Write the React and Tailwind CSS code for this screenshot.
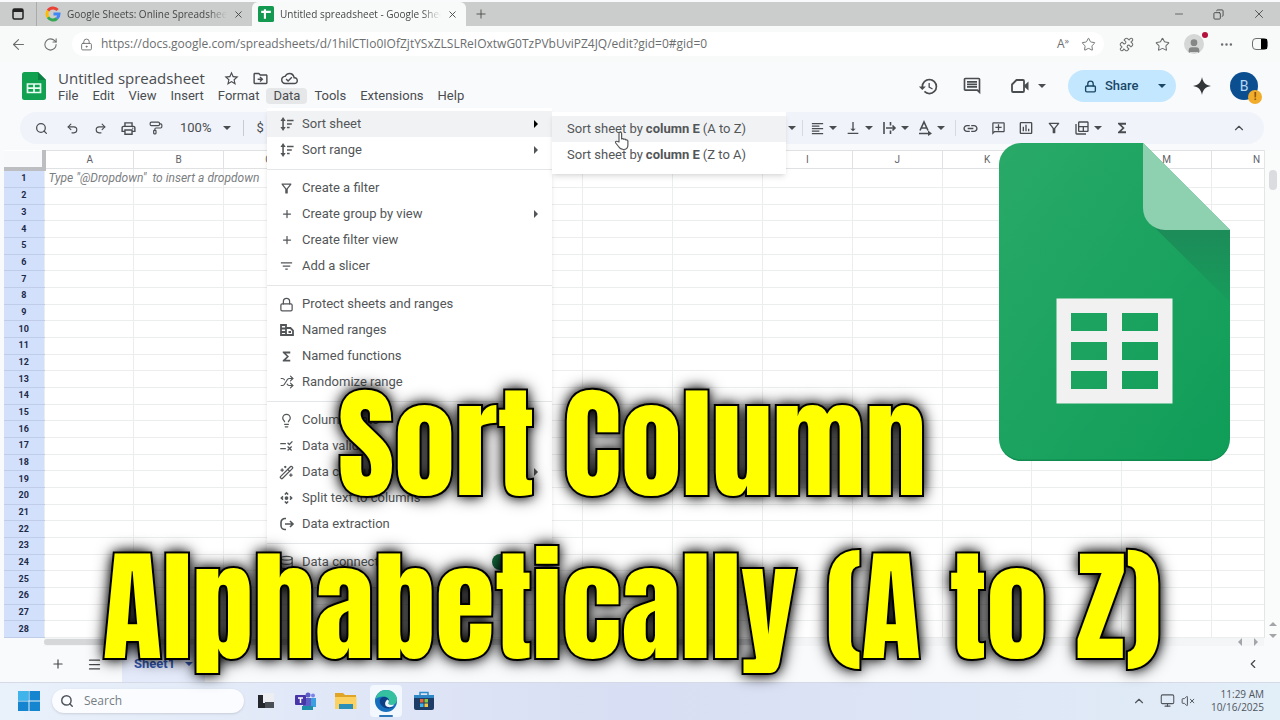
import React from 'react';
import {
    ArrowLeft,
    RotateCw,
    LockKeyhole,
    Lock,
    Star,
    Undo2,
    Redo2,
    PaintRoller,
    Search,
    ChevronUp,
    ChevronLeft,
    X,
    Minus,
    Plus,
    Ellipsis,
    Menu,
    Puzzle,
    Shuffle,
    Lightbulb,
    WandSparkles,
    Database,
    Copy,
    VolumeX,
    Monitor,
    User,
} from 'lucide-react';
import {
    MdFilterList,
    MdOutlineFilterAlt,
    MdFormatAlignLeft,
    MdVerticalAlignBottom,
    MdOutlineRule,
    MdOutlineControlCamera,
    MdBackupTable,
    MdHistory,
    MdOutlineComment,
    MdOutlineAddComment,
    MdInsertChartOutlined,
    MdOutlinePrint,
    MdFunctions,
    MdLink,
    MdStarBorder,
    MdOutlineDriveFileMove,
    MdOutlineCloudDone,
} from 'react-icons/md';

const COLUMNS = ['A', 'B', 'C', 'D', 'E', 'F', 'G', 'H', 'I', 'J', 'K', 'L', 'M', 'N'];
const ROWS = Array.from({ length: 28 }, (_, i) => i + 1);
const MENUS = ['File', 'Edit', 'View', 'Insert', 'Format', 'Data', 'Tools', 'Extensions', 'Help'];

const SortIcon = () => (
    <svg viewBox="0 0 16 16" className="h-3.5 w-3.5 shrink-0" fill="none" stroke="currentColor" strokeWidth="1.8">
        <path d="M3.500 3.500v9M8 4h7.500M8 8h5.500M8 12h3" />
        <path d="M3.500 0 6.500 4.500h-6zM3.500 16l-3-4.500h6z" fill="currentColor" stroke="none" />
    </svg>
);

const NamedRangesIcon = () => (
    <svg viewBox="0 0 16 16" className="h-4 w-4 shrink-0" fill="none" stroke="currentColor" strokeWidth="1.8">
        <path d="M2 3h5v10H2zM7 6h4.500L14 8.500V13H7M2 6.500h5M2 10h5M9.500 10h2.500" />
    </svg>
);

const ExtractIcon = () => (
    <svg viewBox="0 0 16 16" className="h-4 w-4 shrink-0" fill="none" stroke="currentColor" strokeWidth="1.6">
        <path d="M7 2.500H6a4 4 0 0 0-4 4v3a4 4 0 0 0 4 4h1M6 8h8M11 5l3 3-3 3" />
    </svg>
);

const WrapIcon = () => (
    <svg viewBox="0 0 16 16" className="h-4 w-4 shrink-0" fill="none" stroke="currentColor" strokeWidth="1.6">
        <path d="M3 2v12M9.500 2v3.500M9.500 10.500V14M5 8h9M11.500 5.500 14 8l-2.500 2.500" />
    </svg>
);

const RotationIcon = () => (
    <svg viewBox="0 0 16 16" className="h-4 w-4 shrink-0" fill="none" stroke="currentColor" strokeWidth="1.6">
        <path d="M3 10.500 7 2l4 8.500M4.500 8h5M2 13.500h9" />
        <path d="M11 10.500l4 3-4 2.500z" fill="currentColor" stroke="none" />
    </svg>
);

const MeetIcon = () => (
    <svg viewBox="0 0 20 18" className="h-[18px] w-5" fill="none" stroke="currentColor" strokeWidth="1.8">
        <path d="M6.500 3H13a1 1 0 0 1 1 1v10a1 1 0 0 1-1 1H3a1 1 0 0 1-1-1V7.500z" strokeLinejoin="round" />
        <path d="M14 8.500l4.500-4v9l-4.500-4z" fill="currentColor" stroke="none" />
    </svg>
);

const MENU_GROUPS = [
    [
        { label: 'Sort sheet', icon: <SortIcon />, sub: true, active: true },
        { label: 'Sort range', icon: <SortIcon />, sub: true },
    ],
    [
        { label: 'Create a filter', icon: <MdOutlineFilterAlt size={15} /> },
        { label: 'Create group by view', icon: <Plus size={12} strokeWidth={2.5} />, sub: true },
        { label: 'Create filter view', icon: <Plus size={12} strokeWidth={2.5} /> },
        { label: 'Add a slicer', icon: <MdFilterList size={16} /> },
    ],
    [
        { label: 'Protect sheets and ranges', icon: <Lock size={15} /> },
        { label: 'Named ranges', icon: <NamedRangesIcon /> },
        { label: 'Named functions', icon: <MdFunctions size={15} /> },
        { label: 'Randomize range', icon: <Shuffle size={14} /> },
    ],
    [
        { label: 'Column stats', icon: <Lightbulb size={15} /> },
        { label: 'Data validation', icon: <MdOutlineRule size={16} /> },
        { label: 'Data cleanup', icon: <WandSparkles size={15} />, sub: true },
        { label: 'Split text to columns', icon: <MdOutlineControlCamera size={16} /> },
        { label: 'Data extraction', icon: <ExtractIcon /> },
    ],
    [{ label: 'Data connectors', icon: <Database size={15} />, badge: true }],
];

const Caret = ({ className = '' }) => (
    <svg viewBox="0 0 8 4" className={`h-1 w-2 shrink-0 ${className}`} fill="currentColor">
        <path d="M0 0h8L4 4z" />
    </svg>
);

const GoogleIcon = () => (
    <svg viewBox="0 0 16 16" className="h-4 w-4 shrink-0" fill="none" strokeWidth="3">
        <path d="M12.600 4A6 6 0 0 0 3 4.800" stroke="#ea4335" />
        <path d="M3 4.800A6 6 0 0 0 3 11.200" stroke="#fbbc05" />
        <path d="M3 11.200A6 6 0 0 0 12 12.500" stroke="#34a853" />
        <path d="M12 12.500A6 6 0 0 0 14 8H8.500" stroke="#4285f4" />
    </svg>
);

const SheetsTabIcon = () => (
    <svg viewBox="0 0 15 15" className="h-4 w-4 shrink-0">
        <rect width="15" height="15" rx="1.500" fill="#149a50" />
        <path d="M3 5.500h9M6.500 3v9" stroke="#fff" strokeWidth="2" />
    </svg>
);

const SheetsDocIcon = () => (
    <svg viewBox="0 0 24 28" className="h-7 w-6 shrink-0">
        <path d="M2.500 0H16l8 8v17.500a2.500 2.500 0 0 1-2.500 2.500h-19A2.500 2.500 0 0 1 0 25.500v-23A2.500 2.500 0 0 1 2.500 0z" fill="#12a150" />
        <path d="M16 0l8 8h-8z" fill="#0b8043" />
        <path d="M5.500 12h13v8.500h-13zM5.500 16.200h13M12 12v8.500" fill="none" stroke="#e8fff1" strokeWidth="1.700" />
    </svg>
);

const SheetsLogo = () => (
    <svg viewBox="0 0 231 318" className="h-auto w-full" role="img" aria-label="Google Sheets">
        <defs>
            <linearGradient id="body" x1="0" y1="0" x2="1" y2="1">
                <stop offset="0" stopColor="#29a968" />
                <stop offset="1" stopColor="#0f9d58" />
            </linearGradient>
            <linearGradient id="fold" x1="0" y1="0" x2="0" y2="1">
                <stop offset="0" stopColor="#1d8a58" />
                <stop offset="1" stopColor="#179c5b" />
            </linearGradient>
        </defs>
        <path d="M22 0h122l87 87v209a22 22 0 0 1-22 22H22a22 22 0 0 1-22-22V22A22 22 0 0 1 22 0z" fill="url(#body)" />
        <path d="M151 80l80 79V87z" fill="url(#fold)" />
        <path d="M144 0l87 87h-65a22 22 0 0 1-22-22z" fill="#8ed1b1" />
        <path
            d="M57.500 155.500h116v105h-116zM72 170v18h36v-18zM123 170v18h36v-18zM72 199v18h36v-18zM123 199v18h36v-18zM72 228v18h36v-18zM123 228v18h36v-18z"
            fill="#f1f1f1"
            fillRule="evenodd"
        />
        <path d="M2 304a22 22 0 0 0 20 14h187a22 22 0 0 0 20-14a22 22 0 0 1-20 12.500H22A22 22 0 0 1 2 304z" fill="#0b7c46" opacity="0.6" />
    </svg>
);

const BrowserTabs = () => (
    <div className="flex h-6 items-stretch bg-[#cbcdcc] pr-3.5 text-[#454746]">
        <div className="flex w-9 items-center justify-center">
            <svg viewBox="0 0 12 12" className="h-3 w-3" fill="none" stroke="#222" strokeWidth="1.500">
                <rect x="1" y="1" width="10" height="10" rx="1.500" />
                <path d="M1 2.500h10" strokeWidth="3" />
            </svg>
        </div>
        <div className="flex w-[216px] items-center gap-1.5 border-l border-[#a9acab] pl-2">
            <GoogleIcon />
            <span className="flex-1 overflow-hidden whitespace-nowrap font-['Open_Sans',sans-serif] text-[10px] font-medium [mask-image:linear-gradient(to_right,#000_88%,transparent)]">
                Google Sheets: Online Spreadsheets
            </span>
            <button aria-label="Close Google Sheets tab" className="mr-2"><X size={11} /></button>
        </div>
        <div className="flex w-[214px] items-center gap-1.5 rounded-t-md bg-[#f8faf9] pl-1.5">
            <SheetsTabIcon />
            <span className="flex-1 overflow-hidden whitespace-nowrap font-['Open_Sans',sans-serif] text-[10px] font-medium [mask-image:linear-gradient(to_right,#000_88%,transparent)]">
                Untitled spreadsheet - Google Sheets
            </span>
            <button aria-label="Close spreadsheet tab" className="mr-2"><X size={11} /></button>
        </div>
        <button aria-label="New tab" className="px-2"><Plus size={14} strokeWidth={1.5} /></button>
        <div className="ml-auto flex items-center gap-7">
            <button aria-label="Minimize"><Minus size={12} strokeWidth={1.5} /></button>
            <button aria-label="Restore"><Copy size={11} className="-scale-x-100" /></button>
            <button aria-label="Close window"><X size={14} strokeWidth={1.5} /></button>
        </div>
    </div>
);

const AddressBar = () => (
    <div className="flex h-9 items-center bg-[#f8f9f9] pl-2 pr-3 text-[#6b6e6f]">
        <button aria-label="Back" className="flex w-5 justify-center"><ArrowLeft size={17} strokeWidth={1.5} /></button>
        <button aria-label="Reload" className="ml-3 flex w-5 justify-center"><RotateCw size={15} strokeWidth={1.7} /></button>
        <div className="ml-3 flex h-6 flex-1 items-center rounded-full bg-white pl-2 pr-2">
            <LockKeyhole size={13} strokeWidth={1.7} />
            <input
                aria-label="Address"
                readOnly
                className="ml-2 min-w-0 flex-1 bg-transparent font-['Open_Sans',sans-serif] text-xs text-[#6b6e6f] outline-none"
                value="https://docs.google.com/spreadsheets/d/1hilCTIo0IOfZjtYSxZLSLReIOxtwG0TzPVbUviPZ4JQ/edit?gid=0#gid=0"
            />
            <button aria-label="Read aloud" className="font-['Open_Sans',sans-serif] text-xs">A<sup>»</sup></button>
            <button aria-label="Add to favorites" className="ml-3"><Star size={15} strokeWidth={1.5} /></button>
        </div>
        <div className="ml-1 flex items-center">
            <button aria-label="Extensions" className="flex w-9 justify-center"><Puzzle size={15} strokeWidth={1.7} /></button>
            <button aria-label="Favorites" className="flex w-9 justify-center"><Star size={15} strokeWidth={1.7} /></button>
            <button aria-label="Profile" className="relative mx-1 flex h-5 w-5 items-end justify-center rounded-full bg-[#d5d6d6]">
                <User size={16} fill="#858787" stroke="#858787" />
                <span className="absolute -right-1 -top-0.5 h-1.5 w-1.5 rounded-full bg-[#b3123c]" />
            </button>
            <button aria-label="Settings" className="flex w-9 justify-center"><Ellipsis size={15} /></button>
            <button aria-label="Sidebar" className="ml-2 flex h-3 w-4 justify-end rounded-sm border border-[#6b6e6f]">
                <span className="h-full w-1.5 bg-black" />
            </button>
        </div>
    </div>
);

const DocHeader = () => (
    <header className="flex h-12 items-center pl-[22px] pr-[22px] font-[Roboto,sans-serif] text-[#4a4d50]">
        <SheetsDocIcon />
        <div className="ml-[5px] flex flex-col">
            <div className="flex items-center pl-[7px]">
                <h2 className="font-['Open_Sans',sans-serif] text-[15px] leading-5 text-[#4a4d50]">Untitled spreadsheet</h2>
                <div className="ml-[18px] flex items-center gap-3">
                    <button aria-label="Star"><MdStarBorder size={17} /></button>
                    <button aria-label="Move"><MdOutlineDriveFileMove size={17} /></button>
                    <button aria-label="Document status"><MdOutlineCloudDone size={17} /></button>
                </div>
            </div>
            <nav className="flex text-[13px] leading-4">
                {MENUS.map((name) => (
                    <button key={name} className={`rounded-sm px-[7px] ${name === 'Data' ? 'bg-[#e6e7e9]' : ''}`}>
                        {name}
                    </button>
                ))}
            </nav>
        </div>
        <div className="ml-auto flex items-center">
            <button aria-label="Version history" className="flex w-11 justify-center"><MdHistory size={21} /></button>
            <button aria-label="Comments" className="flex w-11 justify-center"><MdOutlineComment size={20} /></button>
            <button aria-label="Meet" className="ml-1.5 flex w-14 items-center justify-center gap-2">
                <MeetIcon />
                <Caret />
            </button>
            <div className="ml-3 flex h-8 w-[108px] items-center rounded-full bg-[#c2e7ff] text-[#1a4766]">
                <button className="flex flex-1 items-center gap-2 pl-4 text-[13px] font-medium">
                    <Lock size={13} strokeWidth={2.5} />
                    Share
                </button>
                <button aria-label="Share options" className="px-2.5"><Caret /></button>
            </div>
            <button aria-label="Gemini" className="ml-4">
                <svg viewBox="0 0 20 20" className="h-5 w-5" fill="#333638">
                    <path d="M10 1c1 5.500 3.500 8 9 9-5.500 1-8 3.500-9 9-1-5.500-3.500-8-9-9 5.500-1 8-3.500 9-9z" />
                </svg>
            </button>
            <button aria-label="Account" className="relative ml-[18px] flex h-7 w-7 items-center justify-center rounded-full bg-[#0c4f91] text-sm text-[#b9d8f5]">
                B
                <span className="absolute -bottom-1 -right-1 flex h-3.5 w-3.5 items-center justify-center rounded-full bg-[#f2ac2b] text-[10px] font-bold leading-none text-[#7a4a00]">!</span>
            </button>
        </div>
    </header>
);

const Tool = ({ label, children }) => (
    <button aria-label={label} className="flex w-7 items-center justify-center">
        {children}
    </button>
);

const DropTool = ({ label, children }) => (
    <button aria-label={label} className="mr-1 flex items-center">
        <span className="flex w-5 justify-center">{children}</span>
        <span className="flex w-3 justify-center"><Caret /></span>
    </button>
);

const Toolbar = () => (
    <div className="ml-5 mr-4 mt-0.5 flex h-8 items-center rounded-full bg-[#f0f3fa] pl-[7px] pr-[15px] font-[Roboto,sans-serif] text-[#4a4d50]">
        <Tool label="Search menus"><Search size={13} strokeWidth={2.3} /></Tool>
        <div className="ml-[3px] flex">
            <Tool label="Undo"><Undo2 size={13} /></Tool>
            <Tool label="Redo"><Redo2 size={13} /></Tool>
            <Tool label="Print"><MdOutlinePrint size={17} /></Tool>
            <Tool label="Paint format"><PaintRoller size={14} /></Tool>
        </div>
        <button className="ml-2.5 flex items-center gap-3 text-[13px]">
            100%
            <Caret />
        </button>
        <span className="mx-3 h-4 w-px bg-[#c7cbd1]" />
        <span className="text-[13px]">$</span>
        <div className="ml-auto flex items-center">
            <Caret />
            <span className="ml-1.5 mr-1 h-4 w-px bg-[#d5d9e0]" />
            <DropTool label="Horizontal align"><MdFormatAlignLeft size={15} /></DropTool>
            <DropTool label="Vertical align"><MdVerticalAlignBottom size={16} /></DropTool>
            <DropTool label="Text wrapping"><WrapIcon /></DropTool>
            <DropTool label="Text rotation"><RotationIcon /></DropTool>
            <span className="ml-1 h-4 w-px bg-[#d5d9e0]" />
            <Tool label="Insert link"><MdLink size={17} /></Tool>
            <Tool label="Insert comment"><MdOutlineAddComment size={15} className="-scale-x-100" /></Tool>
            <Tool label="Insert chart"><MdInsertChartOutlined size={16} /></Tool>
            <Tool label="Create a filter"><MdOutlineFilterAlt size={16} /></Tool>
            <span className="w-1" />
            <DropTool label="Table views"><MdBackupTable size={16} className="-scale-x-100" /></DropTool>
            <Tool label="Functions"><MdFunctions size={16} /></Tool>
        </div>
        <button aria-label="Hide the menus" className="ml-[93px] flex w-5 justify-center"><ChevronUp size={14} /></button>
    </div>
);

const Grid = () => (
    <div className="flex min-h-0 flex-1 pl-1 pt-1.5">
        <div className="min-w-0 flex-1 overflow-hidden">
            <table className="h-full w-[calc(100%+38px)] table-fixed border-collapse bg-white font-[Roboto,sans-serif]">
                <thead>
                    <tr className="h-[18px]">
                        <th aria-label="Select all" className="w-10 border-b-4 border-r-4 border-[#bcbec1] bg-[#f8f9fa]" />
                        {COLUMNS.map((c) => (
                            <th key={c} className="border border-[#dfe1e3] bg-white p-0 text-[10px] font-normal leading-none text-[#5f6368]">{c}</th>
                        ))}
                    </tr>
                </thead>
                <tbody>
                    {ROWS.map((row) => (
                        <tr key={row}>
                            <th className="border-b border-[#c0cde8] bg-[#d3e0fc] p-0 text-[9px] font-bold leading-none text-[#1d2b48]">{row}</th>
                            {COLUMNS.map((c) => (
                                <td key={c} className="border border-[#eceded] p-0 text-[12px] leading-[8px]">
                                    {row === 1 && c === 'A' && (
                                        <span className="block h-2 overflow-visible whitespace-nowrap pl-1 italic text-[#7b7e81]">
                                            Type "@Dropdown"&nbsp; to insert a dropdown
                                        </span>
                                    )}
                                </td>
                            ))}
                        </tr>
                    ))}
                </tbody>
            </table>
        </div>
        <div className="flex w-4 flex-col items-center justify-between border-l border-[#e3e5e7] bg-[#fafbfb] pt-5 text-[#a3a6a9]">
            <div className="h-5 w-2 rounded-full bg-[#dadce0]" />
            <div className="flex flex-col gap-2">
                <Caret className="rotate-180" />
                <Caret />
            </div>
        </div>
    </div>
);

const SheetTabs = () => (
    <div className="ml-1 text-[#444746]">
        <div className="ml-10 mr-4 flex h-2 items-center justify-end gap-2 bg-[#f4f5f6] pr-1 text-[#a3a6a9]">
            <div className="mr-auto h-1.5 w-3/5 rounded-full bg-[#d5d7d9]" />
            <Caret className="rotate-90" />
            <Caret className="-rotate-90" />
        </div>
        <div className="flex h-9 items-center pl-10 pr-5 font-[Roboto,sans-serif]">
            <button aria-label="Add sheet" className="flex w-7 justify-center"><Plus size={14} /></button>
            <button aria-label="All sheets" className="ml-2 flex w-7 justify-center"><Menu size={15} /></button>
            <button className="ml-3.5 flex h-full items-center gap-2.5 bg-[#e4eafa] px-3 text-[13px] font-bold text-[#3257b0]">
                Sheet1
                <Caret />
            </button>
            <button aria-label="Show side panel" className="ml-auto"><ChevronLeft size={14} /></button>
        </div>
    </div>
);

const Taskbar = () => (
    <footer className="flex h-[38px] items-center border-t border-[#d5dae6] bg-linear-to-r from-[#e9f1fb] via-[#d8def3] to-[#e2eef8] pb-0.5 pl-[18px] pr-4 font-['Open_Sans',sans-serif] text-[#50555c]">
        <button aria-label="Start">
            <svg viewBox="0 0 22 20" className="h-5 w-[22px]">
                <path d="M0 0h10.500v9.500H0zM11.500 0H22v9.500H11.500zM0 10.500h10.500V20H0zM11.500 10.500H22V20H11.500z" fill="#1585d0" />
                <path d="M0 0h10.500v9.500H0z" fill="#3fb4ea" />
            </svg>
        </button>
        <label className="ml-3 flex h-6 w-[192px] items-center gap-2.5 rounded-full bg-[#fafcff] pl-2 shadow-sm">
            <Search size={14} strokeWidth={2.5} />
            <input aria-label="Search" placeholder="Search" className="min-w-0 flex-1 bg-transparent text-xs outline-none placeholder:text-[#777c83]" />
        </label>
        <div className="ml-0.5 flex items-center">
            <button aria-label="Task view" className="flex w-10 justify-center">
                <svg viewBox="0 0 18 16" className="h-4 w-[18px]">
                    <path d="M5 0h12v9H5z" fill="#eceef1" />
                    <path d="M1 2h5v8h11v5H1z" fill="#23272c" />
                    <path d="M8 9h9v6H8z" fill="#4a4f55" />
                </svg>
            </button>
            <button aria-label="Teams" className="flex w-10 justify-center">
                <svg viewBox="0 0 22 18" className="h-[18px] w-[22px]">
                    <circle cx="13" cy="3" r="2.500" fill="#5b5fc7" />
                    <circle cx="18" cy="3.500" r="2" fill="#7b83eb" />
                    <path d="M8 6h8v11H8z" fill="#5b5fc7" />
                    <path d="M16 6h5v9h-5z" fill="#3c9fe0" />
                    <rect y="3" width="11" height="10" rx="1" fill="#4636a8" />
                    <path d="M3 6h5M5.500 6v5" stroke="#fff" strokeWidth="1.500" />
                    <path d="M7 14h11v4H7z" fill="#1d8fa8" />
                </svg>
            </button>
            <button aria-label="File Explorer" className="flex w-10 justify-center">
                <svg viewBox="0 0 22 18" className="h-[18px] w-[22px]">
                    <path d="M0 1h8l2 2h11v13H0z" fill="#e0a526" />
                    <path d="M0 5h21.500v12H0z" fill="#fbd261" />
                    <path d="M4 12h14v5H4z" fill="#2c8fb8" />
                </svg>
            </button>
            <button aria-label="Edge" className="relative ml-1 flex h-8 w-8 items-center justify-center rounded bg-[#f3f7fe]">
                <svg viewBox="0 0 22 22" className="h-[22px] w-[22px]">
                    <circle cx="11" cy="11" r="11" fill="#1670bd" />
                    <path d="M0.500 9C2 3 6 0 11 0c7 0 11 5 11 9.500 0 4-3 5.500-6 5.500-2 0-3-1-2-2.500C15 9 12 6.500 8.500 6.500 5 6.500 2 7.500 0.500 9z" fill="#35c0a0" />
                    <path d="M14 12.500C15 9 12 6.800 8.500 7c-4 .3-5 5-2 8.500 2.500 3 8 4 12 1.500-3 .500-6-1-4.500-4.500z" fill="#0c3f86" />
                    <path d="M12.500 9.500c2 1 1.500 2.500 1 3.500-.500 2 3 2.500 6 1.500-1.500 2-4 3-6.500 2.500-3.500-.700-4-5-.500-7.500z" fill="#eef6fd" />
                </svg>
                <span className="absolute bottom-0 h-0.5 w-3.5 rounded-full bg-[#2c76b8]" />
            </button>
            <button aria-label="Microsoft Store" className="ml-0.5 flex w-10 justify-center">
                <svg viewBox="0 0 20 20" className="h-5 w-5">
                    <path d="M6 4V1.500h8V4" fill="none" stroke="#2a8cc9" strokeWidth="1.500" />
                    <rect y="4" width="20" height="15" rx="2" fill="#1d3c66" />
                    <path d="M0 4h20v3H0z" fill="#2f86c4" />
                    <path d="M6 8h3.500v3.500H6z" fill="#e8643c" />
                    <path d="M10.500 8H14v3.500h-3.500z" fill="#8dc63f" />
                    <path d="M6 12.500h3.500V16H6z" fill="#3fb4ea" />
                    <path d="M10.500 12.500H14V16h-3.500z" fill="#f6c443" />
                </svg>
            </button>
        </div>
        <div className="ml-auto flex items-center">
            <button aria-label="Hidden icons"><ChevronUp size={14} /></button>
            <button aria-label="Network" className="ml-3.5"><Monitor size={15} strokeWidth={1.7} /></button>
            <button aria-label="Volume" className="ml-1.5"><VolumeX size={14} strokeWidth={1.7} /></button>
            <div className="ml-4 text-right text-[10px] leading-[13px]">
                <div>11:29 AM</div>
                <div>10/16/2025</div>
            </div>
        </div>
    </footer>
);

const DataMenu = () => (
    <div className="absolute left-[267px] top-[108px] flex items-start font-[Roboto,sans-serif] text-[13px] text-[#535658]">
        <div className="w-[285px] bg-white pb-3 pt-[3px] shadow-md">
            {MENU_GROUPS.map((group, i) => (
                <div key={i} className={i > 0 ? 'mt-[6px] border-t border-[#e4e6e8] pt-[5px]' : ''}>
                    {group.map(({ label, icon, sub, active, badge }) => (
                        <button key={label} className={`flex h-[26px] w-full items-center pl-3 pr-3 ${active ? 'bg-[#f1f2f3]' : ''}`}>
                            <span className="mr-2 flex w-[15px] justify-center">{icon}</span>
                            {label}
                            {sub && <Caret className={`ml-auto -rotate-90 ${active ? 'text-black' : ''}`} />}
                            {badge && <span className="ml-auto mr-4 h-4 w-8 rounded-full bg-[#146c3e]" />}
                        </button>
                    ))}
                </div>
            ))}
        </div>
        <div className="mt-1 w-[234px] bg-white pb-1.5 pt-1 shadow-md">
            <button className="flex h-[26px] w-full items-center gap-[3px] whitespace-nowrap bg-[#f1f2f4] pl-[15px]">
                Sort sheet by <b>column E</b> (A to Z)
            </button>
            <button className="flex h-[26px] w-full items-center gap-[3px] whitespace-nowrap pl-[15px]">
                Sort sheet by <b>column E</b> (Z to A)
            </button>
        </div>
    </div>
);

const HandCursor = () => (
    <svg viewBox="0 0 16 20" className="absolute left-[614px] top-[131px] h-5 w-4" fill="#fff" stroke="#55585a" strokeWidth="1.200" strokeLinejoin="round">
        <path d="M5 11V2.500a1.300 1.300 0 0 1 2.600 0V8c.6-.6 2-.5 2.200.4.600-.5 1.900-.3 2.100.6.700-.4 2 0 2 1.200V14c0 2.800-1.500 4.500-4.400 4.500S5.500 17 4.500 15.500L1.700 12c-.8-1.200.6-2.200 1.700-1.500z" />
    </svg>
);

export default function App() {
    return (
        <div className="relative flex h-screen flex-col overflow-hidden bg-[#f9fafc] pt-0.5">
            <BrowserTabs />
            <AddressBar />
            <DocHeader />
            <Toolbar />
            <Grid />
            <SheetTabs />
            <Taskbar />

            <DataMenu />
            <HandCursor />

            <div className="absolute right-[50px] top-[143px] w-[231px]">
                <SheetsLogo />
            </div>
            <h1 className="absolute inset-x-0 bottom-[32px] pr-4 text-center font-[Anton,sans-serif] text-[122px] font-normal leading-[163px] text-[#ffff00] [-webkit-text-stroke:4px_#000] [paint-order:stroke_fill] [text-shadow:0_0_12px_#000,0_0_18px_#000]">
                Sort Column
                <br />
                Alphabetically (A to Z)
            </h1>
        </div>
    );
}
